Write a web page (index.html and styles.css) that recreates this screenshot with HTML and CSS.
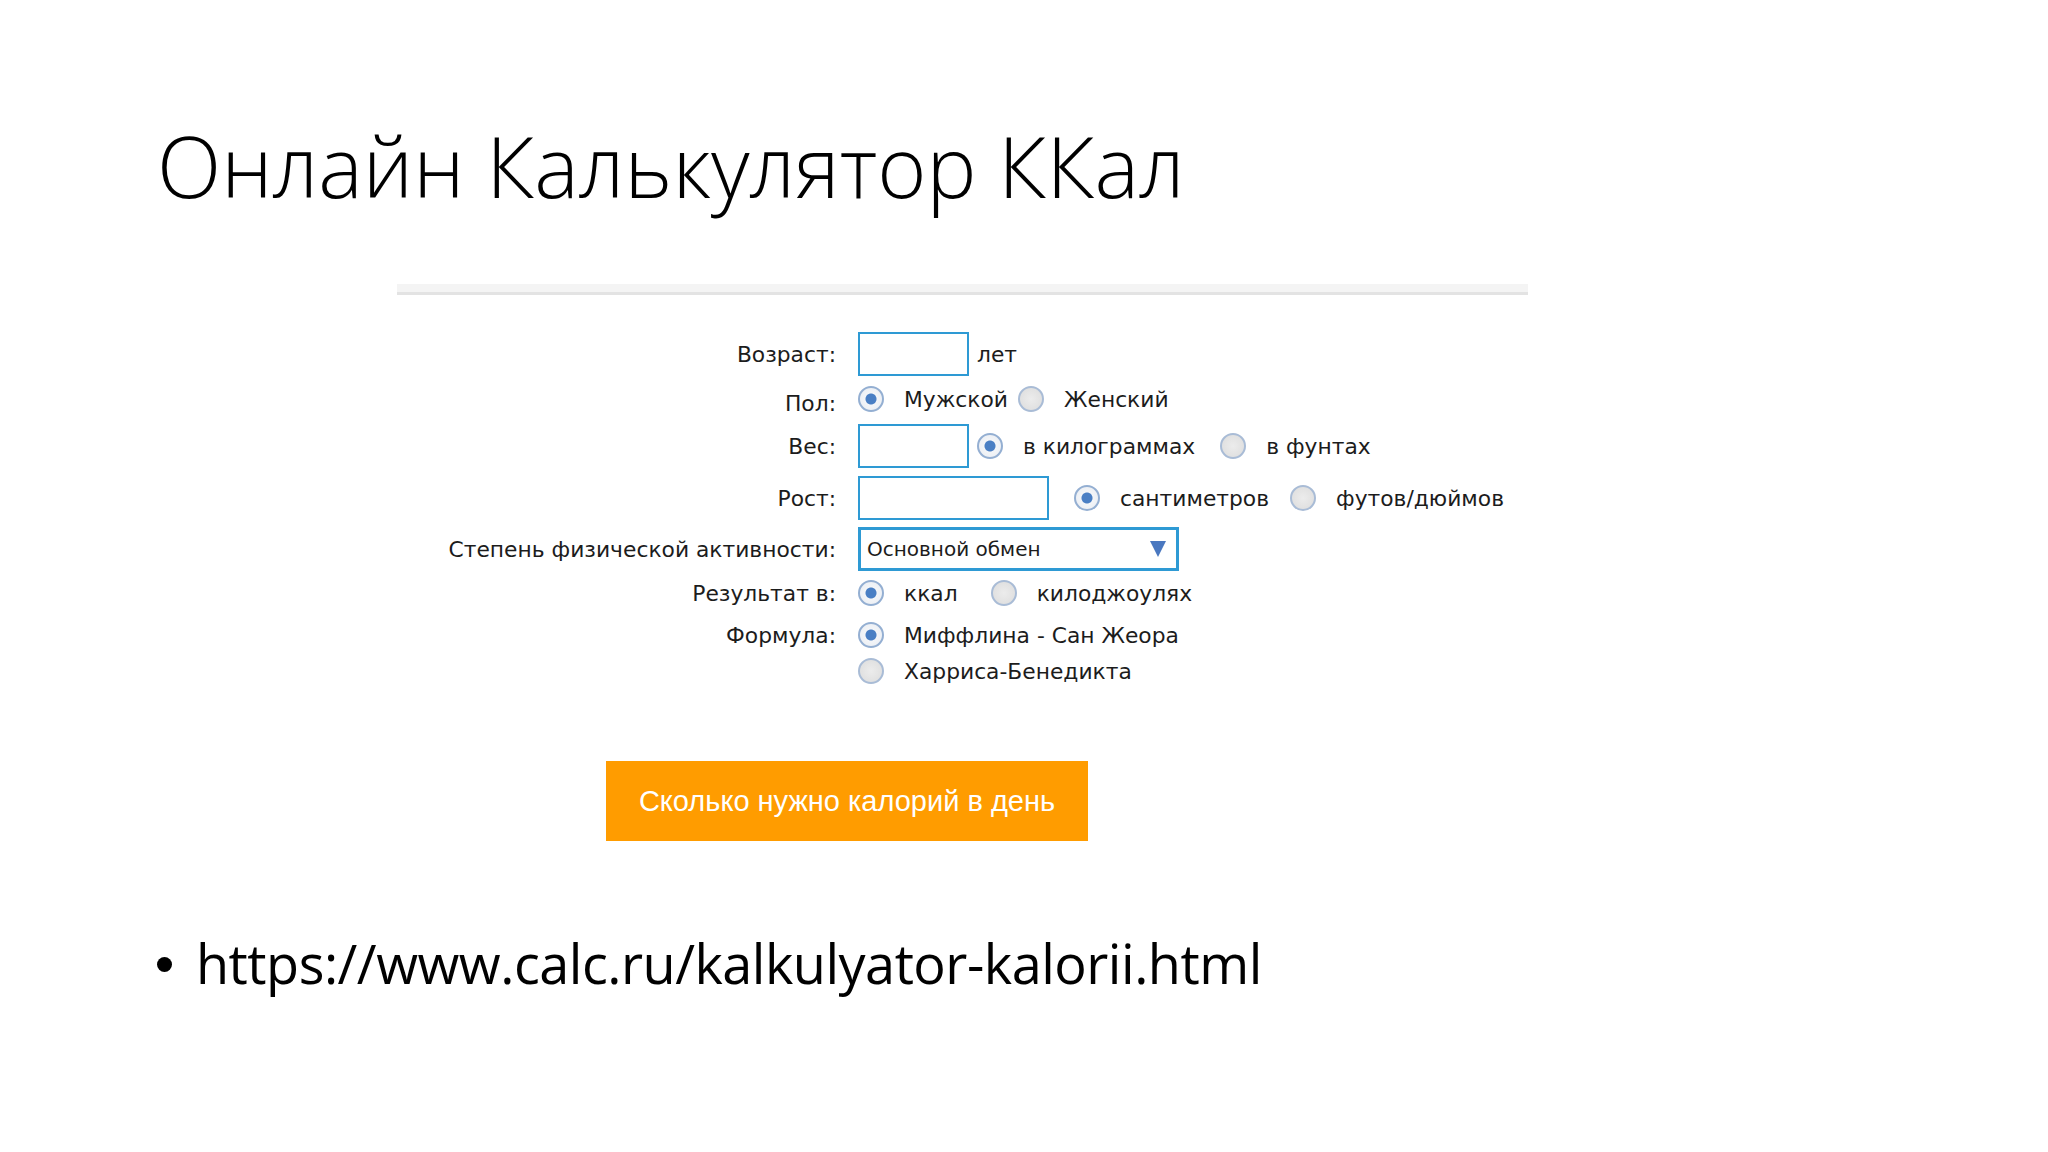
FILE: index.html
```html
<!DOCTYPE html>
<html lang="ru">
<head>
<meta charset="utf-8">
<title>Онлайн Калькулятор ККал</title>
<link rel="stylesheet" href="styles.css">
</head>
<body>
<div class="slide">
  <h1 class="title">Онлайн Калькулятор ККал</h1>
  <div class="band"></div>
  <div class="form">
    <div class="row r1">
      <div class="lbl">Возраст:</div>
      <div class="ctl">
        <span class="inp short"></span>
        <span class="txt unit">лет</span>
      </div>
    </div>
    <div class="row r2">
      <div class="lbl lbl-low">Пол:</div>
      <div class="ctl">
        <span class="radio on"></span><span class="txt opt">Мужской</span>
        <span class="radio g10"></span><span class="txt opt">Женский</span>
      </div>
    </div>
    <div class="row r3">
      <div class="lbl">Вес:</div>
      <div class="ctl">
        <span class="inp short"></span>
        <span class="radio on g8"></span><span class="txt opt">в килограммах</span>
        <span class="radio g25"></span><span class="txt opt">в фунтах</span>
      </div>
    </div>
    <div class="row r4">
      <div class="lbl">Рост:</div>
      <div class="ctl">
        <span class="inp long"></span>
        <span class="radio on g25"></span><span class="txt opt">сантиметров</span>
        <span class="radio g21"></span><span class="txt opt">футов/дюймов</span>
      </div>
    </div>
    <div class="row r5">
      <div class="lbl">Степень физической активности:</div>
      <div class="ctl">
        <span class="select">
          <span class="sel-txt">Основной обмен</span>
          <svg class="arrow" width="16" height="18" viewBox="0 0 16 18"><path d="M0 1 H16 L8 17 Z" fill="#4a78c0"/></svg>
        </span>
      </div>
    </div>
    <div class="row r6">
      <div class="lbl">Результат в:</div>
      <div class="ctl">
        <span class="radio on"></span><span class="txt opt">ккал</span>
        <span class="radio g33"></span><span class="txt opt">килоджоулях</span>
      </div>
    </div>
    <div class="row r7">
      <div class="lbl">Формула:</div>
      <div class="ctl">
        <span class="radio on"></span><span class="txt opt">Миффлина - Сан Жеора</span>
      </div>
    </div>
    <div class="row r8">
      <div class="lbl"></div>
      <div class="ctl">
        <span class="radio"></span><span class="txt opt">Харриса-Бенедикта</span>
      </div>
    </div>
  </div>
  <div class="btn">Сколько нужно калорий в день</div>
  <div class="bullet">
    <span class="dot"></span>
    <span class="url">https://www.calc.ru/kalkulyator-kalorii.html</span>
  </div>
</div>
</body>
</html>
```
FILE: styles.css
```css
html, body {
  margin: 0;
  padding: 0;
  background: #ffffff;
}
.slide {
  width: 2048px;
  height: 1152px;
  overflow: hidden;
  position: relative;
  background: #ffffff;
}
.title {
  margin: 124px 0 0 157px;
  font-family: "Open Sans", "DejaVu Sans", sans-serif;
  font-weight: 300;
  font-size: 84px;
  line-height: 84px;
  letter-spacing: 0;
  color: #000000;
  white-space: nowrap;
}
.band {
  margin: 76px 0 0 397px;
  width: 1131px;
  height: 8px;
  background: #f4f4f4;
  border-bottom: 3px solid #e3e3e3;
}
.form {
  margin: 37px 0 0 397px;
  font-family: "DejaVu Sans", Verdana, sans-serif;
  font-size: 21.8px;
  color: #1c1c1c;
}
.row {
  display: flex;
  align-items: center;
}
.r1 { height: 44px; }
.r2 { height: 46px; }
.r3 { height: 48px; }
.r4 { height: 56px; }
.r5 { height: 46px; }
.r6 { height: 42px; }
.r7 { height: 42px; }
.r8 { height: 30px; }
.lbl {
  width: 439px;
  text-align: right;
  white-space: nowrap;
}
.lbl-low {
  padding-top: 8px;
}
.ctl {
  margin-left: 22px;
  display: flex;
  align-items: center;
  white-space: nowrap;
}
.inp {
  display: block;
  box-sizing: border-box;
  height: 44px;
  border: 2px solid #2e9ad4;
  background: #ffffff;
}
.inp.short { width: 111px; }
.inp.long { width: 191px; }
.unit { margin-left: 8px; }
.radio {
  display: block;
  box-sizing: border-box;
  width: 26px;
  height: 26px;
  border-radius: 50%;
  border: 2px solid #a9bcd6;
  background: radial-gradient(circle, #ececec 0, #dcdcdc 100%);
  flex: none;
}
.radio.on {
  border-color: #94afd2;
  background: radial-gradient(circle, #4a7fc4 0, #4a7fc4 5px, #f3f5f8 6px, #e8ecf2 100%);
}
.opt { margin-left: 20px; }
.g8 { margin-left: 8px; }
.g10 { margin-left: 10px; }
.g21 { margin-left: 21px; }
.g25 { margin-left: 25px; }
.g33 { margin-left: 33px; }
.select {
  display: flex;
  align-items: center;
  justify-content: space-between;
  box-sizing: border-box;
  width: 321px;
  height: 44px;
  border: 3px solid #2e9ad4;
  padding: 0 10px 0 6px;
  background: #ffffff;
}
.sel-txt {
  font-size: 20px;
}
.arrow {
  display: block;
}
.btn {
  margin: 75px 0 0 606px;
  width: 482px;
  height: 80px;
  background: #ff9c00;
  color: #ffffff;
  font-family: "Liberation Sans", Arial, sans-serif;
  font-size: 29px;
  display: flex;
  align-items: center;
  justify-content: center;
}
.bullet {
  margin: 86px 0 0 157px;
  display: flex;
  align-items: center;
  font-family: "Open Sans", "DejaVu Sans", sans-serif;
  font-size: 54px;
  line-height: 72px;
  color: #000000;
  white-space: nowrap;
}
.dot {
  width: 15px;
  height: 15px;
  border-radius: 50%;
  background: #000000;
  margin: 2px 24px 0 0;
  flex: none;
}
.url {
  letter-spacing: -0.5px;
}
```
